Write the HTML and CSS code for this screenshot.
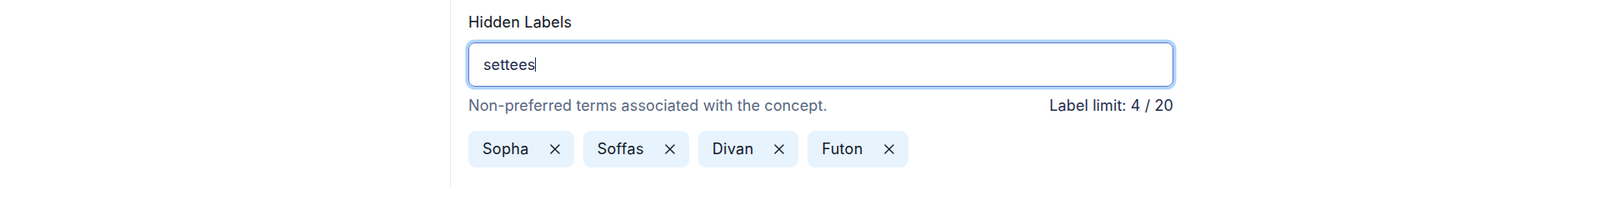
FILE: index.html
```html
<!DOCTYPE html>
<html lang="en">
<head>
<meta charset="utf-8">
<title>Hidden Labels</title>
<link rel="stylesheet" href="styles.css">
</head>
<body>
<main class="panel">
  <section class="field">
    <label class="field-label" for="hidden-input">Hidden Labels</label>
    <div class="input" id="hidden-input" role="textbox"><span class="input-text">settees</span><span class="caret"></span></div>
    <div class="help-row">
      <span class="help">Non-preferred terms associated with the concept.</span>
      <span class="limit">Label limit: 4 / 20</span>
    </div>
    <ul class="tags">
      <li class="tag"><span class="tag-text">Sopha</span><button class="tag-remove" aria-label="Remove Sopha"><svg viewBox="0 0 12 12" width="12" height="12"><path d="M1 1L11 11M11 1L1 11"/></svg></button></li>
      <li class="tag"><span class="tag-text">Soffas</span><button class="tag-remove" aria-label="Remove Soffas"><svg viewBox="0 0 12 12" width="12" height="12"><path d="M1 1L11 11M11 1L1 11"/></svg></button></li>
      <li class="tag"><span class="tag-text">Divan</span><button class="tag-remove" aria-label="Remove Divan"><svg viewBox="0 0 12 12" width="12" height="12"><path d="M1 1L11 11M11 1L1 11"/></svg></button></li>
      <li class="tag"><span class="tag-text">Futon</span><button class="tag-remove" aria-label="Remove Futon"><svg viewBox="0 0 12 12" width="12" height="12"><path d="M1 1L11 11M11 1L1 11"/></svg></button></li>
    </ul>
  </section>
</main>
</body>
</html>
```
FILE: styles.css
```css
html, body {
  margin: 0;
  padding: 0;
  background: #ffffff;
}
body {
  font-family: Inter, "Noto Sans", "Liberation Sans", sans-serif;
  font-size: 18px;
  letter-spacing: 0.1px;
  line-height: 24px;
  color: #111827;
  height: 223px;
  overflow: hidden;
}
.panel {
  margin-left: 540px;
  border-left: 1px solid #e4e6ea;
  padding: 15px 0 0 21px;
  height: 223px;
  box-sizing: border-box;
}
.field {
  width: 846px;
  display: flex;
  flex-direction: column;
}
.field-label {
  display: block;
  font-weight: 400;
  letter-spacing: 0.2px;
  color: #0b1220;
}
.input {
  margin-top: 12px;
  height: 53px;
  box-sizing: border-box;
  border: 1.5px solid #5a78cc;
  border-radius: 8px;
  box-shadow: 0 0 0 3.5px #aed3fc;
  padding: 0 17px;
  display: flex;
  align-items: center;
  color: #1b2a4e;
}
.caret {
  width: 1px;
  height: 17px;
  background: #1b2a4e;
}
.help-row {
  margin-top: 11px;
  display: flex;
  justify-content: space-between;
}
.help {
  color: #56667f;
}
.limit {
  color: #1e2b4b;
}
.tags {
  list-style: none;
  margin: 18px 0 0;
  padding: 0;
  display: flex;
  gap: 11px;
}
.tag {
  height: 44px;
  box-sizing: border-box;
  display: flex;
  align-items: center;
  gap: 25px;
  padding: 0 17px;
  background: #e7f3fd;
  border-radius: 9px;
  color: #0f172a;
  letter-spacing: 0.3px;
}
.tag-remove {
  border: 0;
  background: none;
  padding: 0;
  width: 12px;
  height: 12px;
  display: flex;
  cursor: pointer;
}
.tag-remove svg {
  stroke: #1a1f2b;
  stroke-width: 1.5;
  fill: none;
  stroke-linecap: round;
}
```
